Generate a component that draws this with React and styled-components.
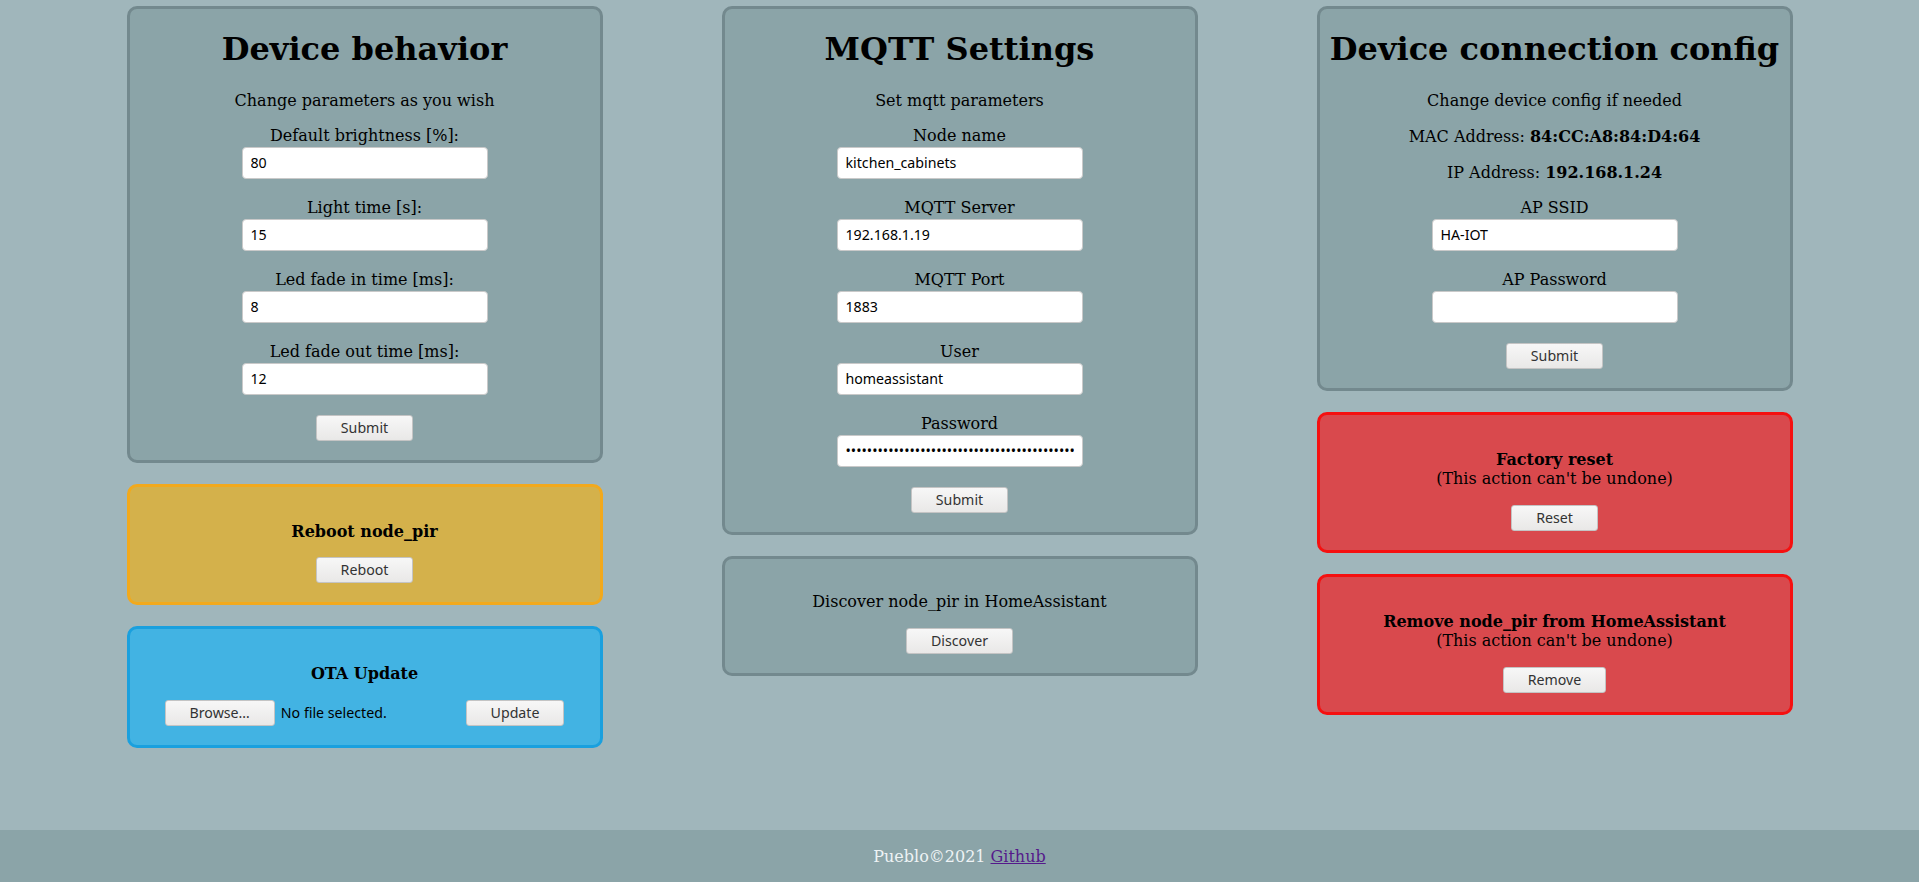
import React from "react";
import styled, { createGlobalStyle } from "styled-components";

const GlobalStyle = createGlobalStyle`
  html, body { margin: 0; padding: 0; }
  body {
    background: #a0b6bb;
    font-family: "DejaVu Serif", "Liberation Serif", serif;
    font-size: 16px;
    color: #000;
  }
  * { box-sizing: border-box; }
`;

const tones = {
  gray: { bg: "#8ba4a8", border: "#73898e" },
  yellow: { bg: "#d4b14b", border: "#f2a91c" },
  blue: { bg: "#42b3e3", border: "#1aa0de" },
  red: { bg: "#d9494d", border: "#f51010" },
};

const Page = styled.div`
  min-height: 100vh;
  display: flex;
  flex-direction: column;
`;

const Main = styled.main`
  flex: 1;
  display: flex;
  justify-content: center;
  align-items: flex-start;
  gap: 119px;
  padding-top: 6px;
`;

const Column = styled.div`
  width: 476px;
  display: flex;
  flex-direction: column;
  gap: 21px;
`;

const Card = styled.section`
  width: 100%;
  border: 3px solid ${(p) => tones[p.$tone].border};
  background: ${(p) => tones[p.$tone].bg};
  border-radius: 10px;
  text-align: center;
  display: flex;
  flex-direction: column;
  align-items: center;
  padding: 0 0 19px;
`;

const ActionCard = styled(Card)`
  padding-top: ${(p) => p.$top || 35}px;
`;

const Title = styled.h1`
  font-size: 32px;
  font-weight: bold;
  line-height: 37px;
  margin: 21.5px 0 23px;
  white-space: nowrap;
`;

const Para = styled.p`
  margin: 0 0 17px;
  line-height: 19px;
`;

const Form = styled.form`
  display: flex;
  flex-direction: column;
  align-items: center;
  gap: 20px;
`;

const Field = styled.div`
  display: flex;
  flex-direction: column;
  align-items: center;
`;

const Label = styled.label`
  line-height: 17px;
  margin-bottom: 3px;
`;

const Input = styled.input`
  width: 246px;
  height: 32px;
  padding: 0 8px;
  border: 1px solid #c9c9c9;
  border-radius: 4px;
  background: #fff;
  font-family: "Noto Sans", "Open Sans", sans-serif;
  font-size: 14.2px;
  color: #000;
  outline: none;
`;

const Button = styled.button`
  height: 26px;
  padding: 0 24px;
  border: 1px solid #c4c4c4;
  border-radius: 3px;
  background: linear-gradient(#f7f7f7, #e9e8e7);
  font-family: "Noto Sans", "Open Sans", sans-serif;
  font-size: 14.2px;
  color: #333;
  line-height: 24px;
  cursor: pointer;
`;

const InfoText = styled.div`
  line-height: 19.5px;
  margin-bottom: 16px;
  font-weight: ${(p) => (p.$bold ? "bold" : "normal")};
`;

const Strong = styled.b`
  font-weight: bold;
`;

const FileRow = styled.div`
  display: flex;
  align-items: center;
  gap: 4px;
`;

const FilePicker = styled.div`
  width: 297px;
  display: flex;
  align-items: center;
  gap: 6px;
`;

const FileStatus = styled.span`
  font-family: "Noto Sans", "Open Sans", sans-serif;
  font-size: 14.2px;
`;

const Footer = styled.footer`
  height: 52px;
  background: #8ba4a8;
  color: #eef3f5;
  display: flex;
  align-items: center;
  justify-content: center;
  gap: 5px;
`;

const Link = styled.a`
  color: #551a8b;
  text-decoration: underline;
`;

function TextField({ label, value, type = "text" }) {
  return (
    <Field>
      <Label>{label}</Label>
      <Input type={type} defaultValue={value} readOnly />
    </Field>
  );
}

export default function App() {
  return (
    <Page>
      <GlobalStyle />
      <Main>
        <Column>
          <Card $tone="gray">
            <Title>Device behavior</Title>
            <Para>Change parameters as you wish</Para>
            <Form onSubmit={(e) => e.preventDefault()}>
              <TextField label="Default brightness [%]:" value="80" />
              <TextField label="Light time [s]:" value="15" />
              <TextField label="Led fade in time [ms]:" value="8" />
              <TextField label="Led fade out time [ms]:" value="12" />
              <Button type="button">Submit</Button>
            </Form>
          </Card>
          <ActionCard $tone="yellow">
            <InfoText $bold>Reboot node_pir</InfoText>
            <Button type="button">Reboot</Button>
          </ActionCard>
          <ActionCard $tone="blue">
            <InfoText $bold>OTA Update</InfoText>
            <FileRow>
              <FilePicker>
                <Button type="button">Browse…</Button>
                <FileStatus>No file selected.</FileStatus>
              </FilePicker>
              <Button type="button">Update</Button>
            </FileRow>
          </ActionCard>
        </Column>

        <Column>
          <Card $tone="gray">
            <Title>MQTT Settings</Title>
            <Para>Set mqtt parameters</Para>
            <Form onSubmit={(e) => e.preventDefault()}>
              <TextField label="Node name" value="kitchen_cabinets" />
              <TextField label="MQTT Server" value="192.168.1.19" />
              <TextField label="MQTT Port" value="1883" />
              <TextField label="User" value="homeassistant" />
              <TextField
                label="Password"
                type="password"
                value="homeassistantpasswordhomeassistantpassword1234567"
              />
              <Button type="button">Submit</Button>
            </Form>
          </Card>
          <ActionCard $tone="gray" $top={33.5}>
            <InfoText>Discover node_pir in HomeAssistant</InfoText>
            <Button type="button">Discover</Button>
          </ActionCard>
        </Column>

        <Column>
          <Card $tone="gray">
            <Title>Device connection config</Title>
            <Para>Change device config if needed</Para>
            <Para>
              MAC Address: <Strong>84:CC:A8:84:D4:64</Strong>
            </Para>
            <Para>
              IP Address: <Strong>192.168.1.24</Strong>
            </Para>
            <Form onSubmit={(e) => e.preventDefault()}>
              <TextField label="AP SSID" value="HA-IOT" />
              <TextField label="AP Password" value="" type="password" />
              <Button type="button">Submit</Button>
            </Form>
          </Card>
          <ActionCard $tone="red">
            <InfoText>
              <Strong>Factory reset</Strong>
              <br />
              (This action can't be undone)
            </InfoText>
            <Button type="button">Reset</Button>
          </ActionCard>
          <ActionCard $tone="red">
            <InfoText>
              <Strong>Remove node_pir from HomeAssistant</Strong>
              <br />
              (This action can't be undone)
            </InfoText>
            <Button type="button">Remove</Button>
          </ActionCard>
        </Column>
      </Main>
      <Footer>
        <span>Pueblo©2021</span>
        <Link href="#">Github</Link>
      </Footer>
    </Page>
  );
}
